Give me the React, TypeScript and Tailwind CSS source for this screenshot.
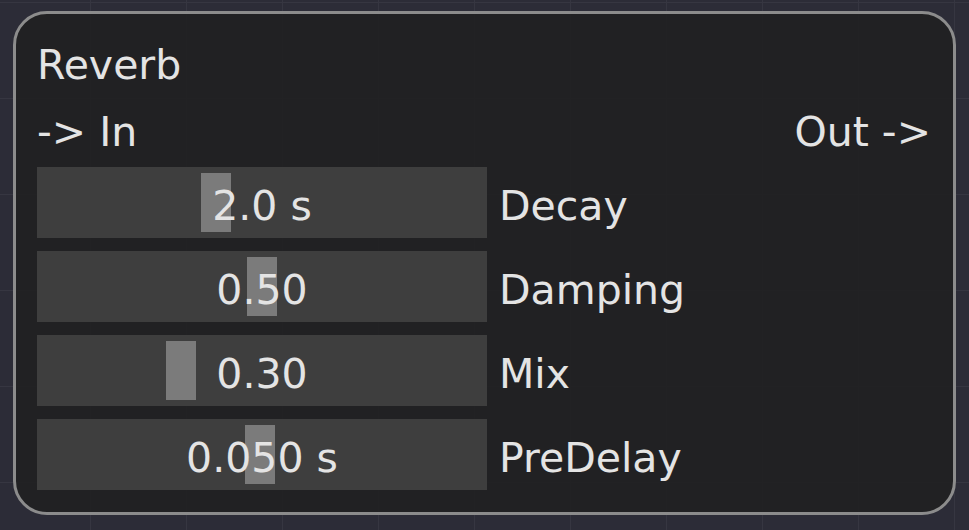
import type React from "react"

type Param = {
    label: string
    value: string
    thumb: number // px from the left edge of the bar
}

const params: Param[] = [
    { label: "Decay", value: "2.0 s", thumb: 164 },
    { label: "Damping", value: "0.50", thumb: 210 },
    { label: "Mix", value: "0.30", thumb: 129 },
    { label: "PreDelay", value: "0.050 s", thumb: 208 },
]

const ParamRow: React.FC<Param> = ({ label, value, thumb }) => {
    return (
        <div className="flex items-center gap-[12px]">
            <div className="relative flex h-[71px] w-[450px] items-center justify-center bg-[#404040]/95 pt-2">
                <div
                    className="absolute top-[6px] bottom-[6px] w-[30px] bg-[#7b7b7b]"
                    style={{ left: thumb }}
                />
                <span className="relative leading-none">{value}</span>
            </div>
            <span className="pt-2 leading-none">{label}</span>
        </div>
    )
}

export default function App() {
    return (
        <div
            className="h-[530px] w-full overflow-hidden bg-[#2c2c37] bg-[linear-gradient(to_right,#363641_1px,transparent_1px),linear-gradient(to_bottom,#363641_1px,transparent_1px)] bg-[size:96px_96px] bg-[position:90px_98px] pt-[11px] pl-[13px]"
            style={{ fontFamily: '"DejaVu Sans", sans-serif' }}
        >
            <div className="flex h-[504px] w-[943px] flex-col rounded-[34px] border-[3px] border-[#8c8c8c] bg-[#202021]/90 pt-[31px] pr-[22px] pl-[21px] text-[41px] text-[#e4e4e4]">
                <div className="h-[41px] leading-none">Reverb</div>
                <div className="mt-[26px] flex h-[41px] items-center justify-between leading-none">
                    <span>-&gt; In</span>
                    <span>Out -&gt;</span>
                </div>
                <div className="mt-[14px] flex flex-col gap-[13px]">
                    {params.map((p) => (
                        <ParamRow key={p.label} {...p} />
                    ))}
                </div>
            </div>
        </div>
    )
}
